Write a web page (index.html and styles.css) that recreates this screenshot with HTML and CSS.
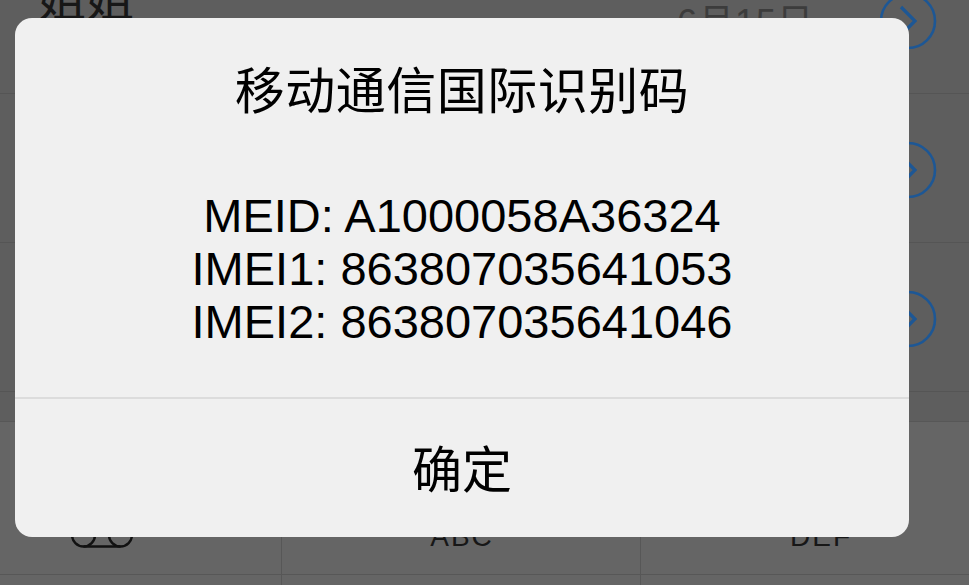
FILE: index.html
```html
<!DOCTYPE html>
<html lang="zh-CN">
<head>
<meta charset="utf-8">
<title>移动通信国际识别码</title>
<link rel="stylesheet" href="styles.css">
</head>
<body>
<div class="screen">
  <div class="list">
    <div class="row">
      <div class="row-name">姐姐</div>
      <div class="row-date">6月15日</div>
      <svg class="info" viewBox="0 0 60 60"><circle cx="30" cy="30" r="27" /><path d="M23 16 L37 30 L23 44" /></svg>
    </div>
    <div class="row">
      <div class="row-name"></div>
      <div class="row-date"></div>
      <svg class="info" viewBox="0 0 60 60"><circle cx="30" cy="30" r="27" /><path d="M23 16 L37 30 L23 44" /></svg>
    </div>
    <div class="row">
      <div class="row-name"></div>
      <div class="row-date"></div>
      <svg class="info" viewBox="0 0 60 60"><circle cx="30" cy="30" r="27" /><path d="M23 16 L37 30 L23 44" /></svg>
    </div>
  </div>
  <div class="keypad">
    <div class="key">
      <svg class="vm" viewBox="0 0 62 28"><circle cx="12.5" cy="13" r="11.5" /><circle cx="49.5" cy="13" r="11.5" /><path d="M12.5 24.5 H49.5" /></svg>
    </div>
    <div class="key"><span class="letters">ABC</span></div>
    <div class="key"><span class="letters">DEF</span></div>
    <div class="key"></div>
    <div class="key"></div>
    <div class="key"></div>
  </div>

  <div class="alert">
    <div class="alert-body">
      <div class="alert-title">移动通信国际识别码</div>
      <div class="alert-message">
        <div>MEID: A1000058A36324</div>
        <div>IMEI1: 863807035641053</div>
        <div>IMEI2: 863807035641046</div>
      </div>
    </div>
    <div class="alert-button">确定</div>
  </div>
</div>
</body>
</html>
```

FILE: styles.css
```css
html, body {
  margin: 0;
  padding: 0;
}
body {
  width: 969px;
  height: 585px;
  overflow: hidden;
  font-family: "Liberation Sans", "Noto Sans CJK SC", sans-serif;
}
.screen {
  position: relative;
  width: 969px;
  height: 585px;
  overflow: hidden;
  background: #5e5e5e;
}
.list {
  margin-top: -55px;
}
.row {
  height: 148px;
  border-bottom: 1px solid #555555;
  display: flex;
  align-items: flex-start;
  padding-left: 38px;
  padding-right: 31px;
  box-sizing: content-box;
}
.row-name {
  font-family: "Noto Sans CJK SC", sans-serif;
  font-size: 48px;
  line-height: 48px;
  color: #171717;
  padding-top: 26px;
  flex: 1;
}
.row-date {
  font-family: "Liberation Sans", "Noto Sans CJK SC", sans-serif;
  font-size: 36px;
  line-height: 36px;
  letter-spacing: 1px;
  color: #3c3c3c;
  padding-top: 60px;
  margin-right: 64px;
}
.info {
  width: 60px;
  height: 60px;
  margin-top: 46px;
  fill: none;
  stroke: #1d5795;
}
.info circle {
  stroke-width: 2.6;
}
.info path {
  stroke-width: 3.2;
}
.keypad {
  margin-top: 29px;
  margin-left: -77px;
  display: grid;
  grid-template-columns: repeat(3, 359px);
  grid-auto-rows: 153px;
  background: #656565;
  border-top: 1px solid #575757;
}
.key {
  border-right: 1px solid #575757;
  border-bottom: 1px solid #575757;
  display: flex;
  flex-direction: column;
  align-items: center;
  justify-content: flex-end;
  padding-bottom: 22px;
  box-sizing: border-box;
}
.letters {
  font-size: 28px;
  line-height: 30px;
  letter-spacing: 2px;
  margin-right: -2px;
  color: #171717;
}
.vm {
  width: 62px;
  height: 28px;
  fill: none;
  stroke: #111111;
  stroke-width: 2.4;
  margin-bottom: 2px;
}
.alert {
  position: absolute;
  left: 15px;
  top: 18px;
  width: 894px;
  height: 519px;
  background: #f0f0f0;
  border-radius: 17px;
  display: flex;
  flex-direction: column;
  overflow: hidden;
}
.alert-body {
  height: 379px;
  border-bottom: 2px solid #dcdcdc;
  display: flex;
  flex-direction: column;
  align-items: center;
  color: #000000;
}
.alert-title {
  font-family: "Noto Sans CJK SC", sans-serif;
  font-size: 50px;
  line-height: 60px;
  letter-spacing: 0.5px;
  margin-top: 39px;
}
.alert-message {
  margin-top: 72px;
  font-family: "Liberation Sans", sans-serif;
  font-size: 47px;
  line-height: 53px;
  text-align: center;
}
.alert-button {
  flex: 1;
  display: flex;
  align-items: center;
  justify-content: center;
  padding-bottom: 4px;
  font-family: "Noto Sans CJK SC", sans-serif;
  font-size: 50px;
  color: #000000;
}
```
